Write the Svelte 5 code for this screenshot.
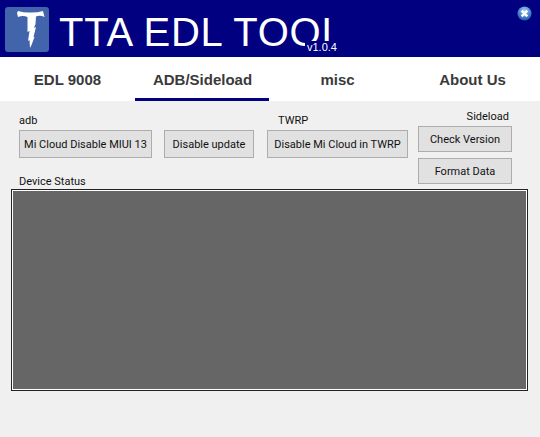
<script lang="ts">
  const tabs = [
    { label: 'EDL 9008' },
    { label: 'ADB/Sideload', active: true },
    { label: 'misc' },
    { label: 'About Us' },
  ];
</script>

<div class="window">
  <header class="title-bar">
    <div class="logo">
      <svg viewBox="0 0 44 45" width="44" height="45" aria-hidden="true">
        <path
          d="M12 6 L13 4 Q20 6 26 5.5 Q33 5.5 38 4 L39.5 10 Q35 8 31 9.5 L30.5 17 L29 21 L31 20 L28.5 30 L29.5 30 L26.5 38 L25 41 L24.5 33 L23 34 L24.5 24 L22.5 25 L22.5 10 Q18 8 13 10 Z"
          fill="#fff"
        />
      </svg>
    </div>
    <h1>TTA EDL TOOL</h1>
    <span class="version">v1.0.4</span>
    <button class="close" type="button" aria-label="Close">
      <svg viewBox="0 0 16 16" width="15" height="15" aria-hidden="true">
        <defs>
          <radialGradient id="ball" cx="50%" cy="30%" r="75%">
            <stop offset="0" stop-color="#a9c9ee" />
            <stop offset="0.55" stop-color="#4d86cf" />
            <stop offset="1" stop-color="#1d4f9c" />
          </radialGradient>
        </defs>
        <circle cx="8" cy="8" r="7.5" fill="url(#ball)" />
        <path d="M5 5 L11 11 M11 5 L5 11" stroke="#fff" stroke-width="2.6" />
      </svg>
    </button>
  </header>

  <nav class="tabs" aria-label="Primary">
    {#each tabs as tab}
      <a href="#top" class:active={tab.active}>{tab.label}</a>
    {/each}
  </nav>

  <main class="page">
    <div class="controls">
      <section class="group adb">
        <span class="caption">adb</span>
        <div class="buttons">
          <button type="button" class="mi-disable">Mi Cloud Disable MIUI 13</button>
          <button type="button" class="update">Disable update</button>
        </div>
      </section>
      <section class="group twrp">
        <span class="caption">TWRP</span>
        <button type="button" class="mi-twrp">Disable Mi Cloud in TWRP</button>
      </section>
      <section class="group sideload">
        <span class="caption">Sideload</span>
        <button type="button" class="side">Check Version</button>
        <button type="button" class="side">Format Data</button>
      </section>
    </div>
    <span class="status-label">Device Status</span>
    <div class="status-box"></div>
  </main>
</div>

<style>
  :global(body) {
    margin: 0;
    background: #f0f0f0;
  }

  .window {
    position: relative;
    width: 540px;
    height: 437px;
    overflow: hidden;
    background: #f0f0f0;
    font-family: Roboto, 'Liberation Sans', sans-serif;
    color: #111;
  }

  .title-bar {
    position: relative;
    display: flex;
    align-items: flex-start;
    height: 57px;
    padding: 7px 0 0 5px;
    box-sizing: border-box;
    background: #000080;
  }

  .logo {
    width: 44px;
    height: 45px;
    border-radius: 3px;
    background: #4264ab;
    flex: none;
  }

  .logo svg {
    display: block;
  }

  h1 {
    margin: 2px 0 0 10px;
    font-family: 'Liberation Sans', Arial, sans-serif;
    font-size: 40px;
    line-height: 46px;
    font-weight: 400;
    letter-spacing: 0.75px;
    color: #fff;
    white-space: nowrap;
  }

  /* sits on the end of the title, as in the original */
  .version {
    position: absolute;
    left: 305px;
    top: 41px;
    width: 46px;
    height: 16px;
    padding-left: 2px;
    box-sizing: border-box;
    background: #000080;
    color: #fff;
    font-family: 'Liberation Sans', Arial, sans-serif;
    font-size: 11px;
    line-height: 13px;
  }

  .close {
    position: absolute;
    top: 6px;
    right: 8px;
    padding: 0;
    border: 0;
    background: none;
    line-height: 0;
  }

  .tabs {
    display: grid;
    grid-template-columns: repeat(4, 1fr);
    height: 44px;
    background: #fff;
  }

  .tabs a {
    display: flex;
    align-items: center;
    justify-content: center;
    box-sizing: border-box;
    height: 44px;
    font-family: 'Liberation Sans', Arial, sans-serif;
    font-size: 15px;
    font-weight: 700;
    color: #3a3a3a;
    text-decoration: none;
  }

  .tabs a.active {
    border-bottom: 3px solid #000080;
    padding: 3px 0 0 1px;
    margin-right: 1px;
  }

  .page {
    padding: 0 12px 0 11px;
  }

  .controls {
    display: flex;
    align-items: flex-start;
    height: 89px;
  }

  .group {
    display: flex;
    flex-direction: column;
  }

  .caption,
  .status-label {
    font-size: 11px;
    line-height: 16px;
  }

  .adb {
    margin: 12px 0 0 8px;
  }

  .adb .caption {
    height: 17px;
  }

  .buttons {
    display: flex;
    gap: 12px;
  }

  .twrp {
    margin: 12px 0 0 13px;
  }

  .twrp .caption {
    height: 17px;
    padding-left: 11px;
  }

  .sideload {
    margin: 8px 0 0 10px;
  }

  .sideload .caption {
    height: 17px;
    text-align: right;
    padding-right: 3px;
  }

  button {
    font: inherit;
  }

  .group button {
    box-sizing: border-box;
    height: 28px;
    padding: 0;
    border: 1px solid #adadad;
    background: #e1e1e1;
    color: #111;
    font-size: 11px;
    white-space: nowrap;
  }

  .mi-disable {
    width: 133px;
  }

  .update {
    width: 90px;
  }

  .mi-twrp {
    width: 141px;
  }

  .group .side {
    width: 94px;
    height: 26px;
  }

  .group .side + .side {
    margin-top: 6px;
  }

  .status-label {
    display: block;
    position: relative;
    height: 10px;
    margin: -16px 0 0 8px;
  }

  .status-box {
    box-sizing: border-box;
    margin-top: 5px;
    width: 517px;
    height: 202px;
    border: 1px solid #222;
    box-shadow: inset 0 0 0 1px #fff;
    background: #666;
  }
</style>
